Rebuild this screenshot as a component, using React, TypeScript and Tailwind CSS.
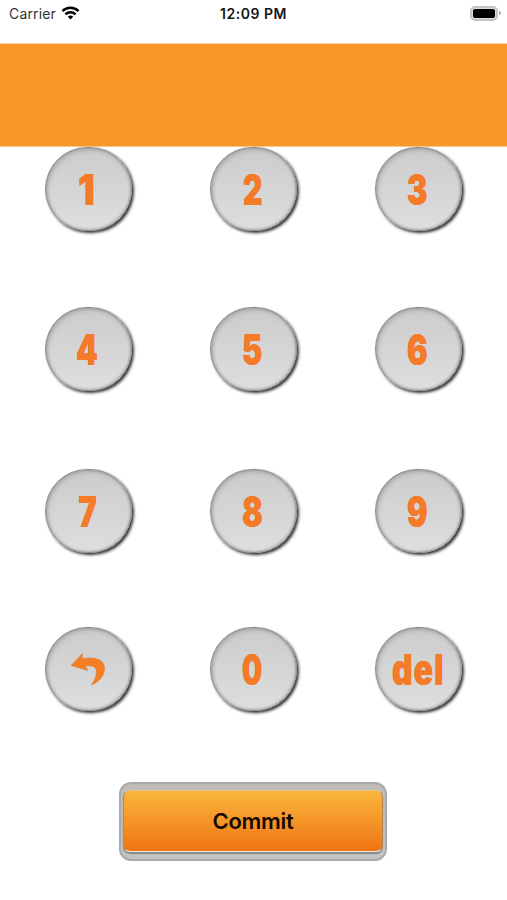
import React from 'react';
import clsx from 'clsx';

const rows = [
  { keys: ['1', '2', '3'], height: 'h-[160px]' },
  { keys: ['4', '5', '6'], height: 'h-[162px]' },
  { keys: ['7', '8', '9'], height: 'h-[158px]' },
  { keys: ['back', '0', 'del'], height: 'h-[155px]' },
];

// labels that need their own width
const labelStyles: Record<string, string> = {
  '1': 'mr-[3px] scale-x-[.86]',
  '0': 'mr-[2px] scale-x-[.66]',
  del: 'scale-x-[.74] tracking-[1.5px]',
};

function StatusBar() {
  return (
    <header className="grid h-[43px] grid-cols-3 items-start pt-[4px] pr-[6px] pl-[9px] font-[Inter,sans-serif] text-[14px] leading-[20px] text-[#151515]">
      <div className="flex items-center gap-[5px]">
        <span className="tracking-[0.15px] text-[#333]">Carrier</span>
        <svg width="19" height="14" viewBox="0 0 18 14" fill="none" stroke="#000" strokeWidth="2.6" className="mb-[2px]">
          <path d="M1 5.1C5.5.7 12.5.7 17 5.1" />
          <path d="M4 8.3c2.8-2.8 7.2-2.8 10 0" />
          <path d="M6.3 10.7c1.5-1.5 3.9-1.5 5.4 0L9 13.5Z" fill="#000" stroke="none" />
        </svg>
      </div>
      <span className="-ml-[3px] text-center font-semibold tracking-[0.5px] whitespace-nowrap">12:09 PM</span>
      <div className="flex h-[18px] items-center justify-end">
        <div className="h-[15px] w-[28px] rounded-[5px] border-2 border-[#c4c4c4] bg-[#ddd] p-px">
          <div className="h-full w-full rounded-[2px] bg-black" />
        </div>
        <div className="ml-px h-[4px] w-[2px] rounded-r-full bg-[#aaa]" />
      </div>
    </header>
  );
}

function KeyLabel({ label }: { label: string }) {
  if (label === 'back') {
    return (
      <svg width="36" height="34" viewBox="0 0 36 34" className="mr-[1px] mb-[1px]">
        <path
          d="M1 13.500 12.500 1.500 12 6.500C23 5 34.500 6 34.500 16.500 34.500 24 29 30 21.500 33 25 28 28 20 25.500 16.500 23.500 13.500 19.500 13.500 15.500 14l2.500 4.500Z"
          fill="#f57e24"
          stroke="#d9803d"
          strokeWidth=".6"
        />
      </svg>
    );
  }
  return (
    <span
      className={clsx(
        'inline-block font-[Inter,sans-serif] text-[43px] leading-none font-black text-[#f57b28] [text-shadow:-0.5px_-0.5px_0_#d87230]',
        labelStyles[label] ?? 'mr-[2px] scale-x-[.71]',
      )}
    >
      {label}
    </span>
  );
}

function Key({ label }: { label: string }) {
  return (
    <button
      aria-label={label}
      className="flex h-[84px] w-[87px] items-center justify-center rounded-full border border-[#8c8c8c] bg-linear-to-b from-[#cccccc] to-[#dedede] shadow-[2px_2px_3px_#333,inset_0_0_3px_#858585,inset_2px_3px_4px_#b8b8b8]"
    >
      <KeyLabel label={label} />
    </button>
  );
}

export default function App() {
  return (
    <main className="min-h-screen bg-white">
      <StatusBar />
      <div className="h-[104px] border-t border-b border-t-[#fbd5a5] border-b-[#fbc68a] bg-[#f89828]" />
      <section className="px-[45px]">
        {rows.map((row) => (
          <div key={row.keys[1]} className={`flex items-start justify-between ${row.height}`}>
            {row.keys.map((key) => (
              <Key key={key} label={key} />
            ))}
          </div>
        ))}
      </section>
      {/* Commit button with its metal frame */}
      <div className="flex justify-center pr-[1px]">
        <button className="h-[79px] w-[268px] rounded-[12px] border-2 border-[#aaa] bg-linear-to-b from-[#c1bab7] to-[#c4c4c4] px-[2px] pt-[6px] pb-[7px]">
          <span className="flex h-full items-center justify-center rounded-[7px] border border-t-[#e6c38a] border-r-[#b68650] border-b-[#eee] border-l-[#b68650] bg-linear-to-b from-[#f9b53c] to-[#ee730d] pt-[1px] font-[Inter,sans-serif] text-[22px] font-semibold tracking-[-0.3px] text-[#160a00] shadow-[0_2px_1px_#858585]">
            Commit
          </span>
        </button>
      </div>
    </main>
  );
}
